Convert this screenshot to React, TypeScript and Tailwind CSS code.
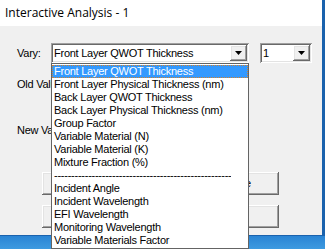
import React from "react";

const items = [
  "Front Layer QWOT Thickness",
  "Front Layer Physical Thickness (nm)",
  "Back Layer QWOT Thickness",
  "Back Layer Physical Thickness (nm)",
  "Group Factor",
  "Variable Material (N)",
  "Variable Material (K)",
  "Mixture Fraction (%)",
  "---",
  "Incident Angle",
  "Incident Wavelength",
  "EFI Wavelength",
  "Monitoring Wavelength",
  "Variable Materials Factor",
];

const sunken =
  "shadow-[inset_1px_1px_#a0a0a0,inset_-1px_-1px_#ffffff,inset_2px_2px_#696969,inset_-2px_-2px_#e3e3e3]";
const raised =
  "shadow-[inset_-1px_-1px_#696969,inset_1px_1px_#ffffff,inset_-2px_-2px_#a0a0a0,inset_2px_2px_#e3e3e3]";

function Arrow() {
  return (
    <div className={`flex h-[16px] w-[17px] items-center justify-center bg-[#f0f0f0] ${raised}`}>
      <svg width="7" height="4" viewBox="0 0 7 4">
        <polygon points="0,0 7,0 3.5,4" fill="#000" />
      </svg>
    </div>
  );
}

function Combo({ text, width }: { text: string; width: string }) {
  return (
    <div className={`flex h-[20px] items-center justify-between bg-white pl-[3px] pr-[2px] ${width} ${sunken}`}>
      <span className="leading-[13px]">{text}</span>
      <Arrow />
    </div>
  );
}

function Button({ label, width }: { label: string; width: string }) {
  return (
    <div className={`flex h-[23px] items-center justify-center bg-[#f0f0f0] ${width} ${raised}`}>
      {label}
    </div>
  );
}

export default function App() {
  return (
    <div className="relative h-[249px] w-[325px] overflow-hidden bg-[#1c7bcc] font-['Liberation_Sans',Arial,sans-serif] text-[11px] tracking-[-0.25px] text-black">
      {/* Window */}
      <div className="flex h-[236px] w-[325px] flex-col border-b border-r-[3px] border-[#1a62ad]">
        <div className="flex h-[26px] items-center bg-white pl-[5px] font-['Open_Sans',sans-serif] text-[12px] tracking-normal text-black">
          Interactive Analysis - 1
        </div>
        <div className="flex flex-1 flex-col bg-[#f0f0f0] pl-[17px] pt-[17px]">
          <div className="flex items-center">
            <span className="w-[34px]">Vary:</span>
            <Combo text="Front Layer QWOT Thickness" width="w-[198px]" />
            <div className="ml-[11px]">
              <Combo text="1" width="w-[52px]" />
            </div>
          </div>
          <div className="mt-[15px] leading-[13px]">Old Value:</div>
          <div className="mt-[33px] leading-[13px]">New Value:</div>
          <div className="ml-[25px] mt-[35px] flex gap-[57px]">
            <Button label="Apply" width="w-[90px]" />
            <Button label="Update" width="w-[90px]" />
          </div>
          <div className="ml-[25px] mt-[10px] flex gap-[57px]">
            <Button label="OK" width="w-[90px]" />
            <Button label="Help" width="w-[90px]" />
          </div>
        </div>
      </div>
      {/* Desktop strip */}
      <div className="h-[13px] bg-gradient-to-b from-[#2a84d4] to-[#3d9ae0]" />

      {/* Open drop-down list */}
      <div className="absolute left-[51px] top-[63px] w-[198px] border border-[#646464] bg-white py-[1px]">
        {items.map((it, i) =>
          it === "---" ? (
            <div key={i} className="h-[13px] overflow-hidden whitespace-nowrap pl-[2px] leading-[13px]">
              <div className="w-[177px] overflow-hidden">
                {"-".repeat(80)}
              </div>
            </div>
          ) : i === 0 ? (
            <div
              key={i}
              className="h-[13px] whitespace-nowrap border border-dotted border-[#d08030] bg-[#3399ff] pl-[1px] leading-[11px] text-white"
            >
              {it}
            </div>
          ) : (
            <div key={i} className="h-[13px] whitespace-nowrap pl-[2px] leading-[13px]">
              {it}
            </div>
          )
        )}
      </div>
    </div>
  );
}
